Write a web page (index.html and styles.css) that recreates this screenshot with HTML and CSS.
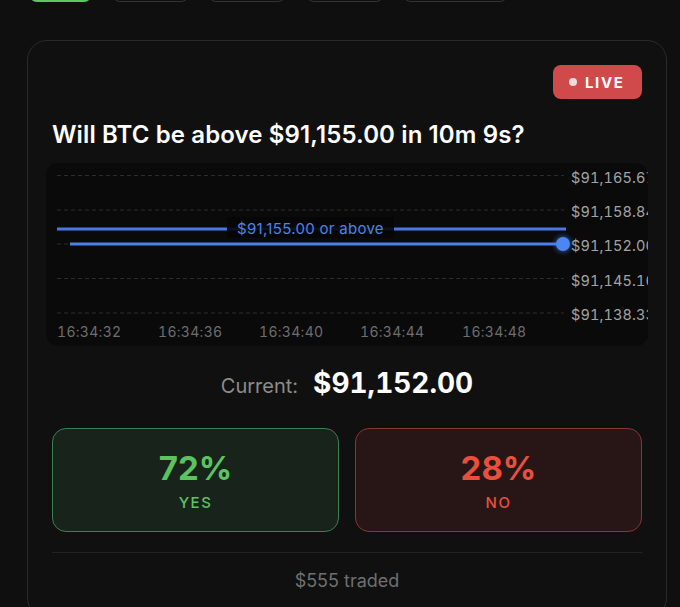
FILE: index.html
```html
<!DOCTYPE html>
<html lang="en">
<head>
<meta charset="utf-8">
<title>BTC market</title>
<link rel="stylesheet" href="styles.css">
</head>
<body>
<div class="page">
  <div class="tabs">
    <div class="tab tab-active tab-a"></div>
    <div class="tab tab-b"></div>
    <div class="tab tab-c"></div>
    <div class="tab tab-c"></div>
    <div class="tab tab-e"></div>
  </div>
  <div class="card">
    <div class="card-head">
      <span class="live"><span class="live-dot"></span>LIVE</span>
    </div>
    <h1 class="question">Will BTC be above $91,155.00 in 10m 9s?</h1>
    <div class="chart">
      <svg class="chart-svg" width="602" height="183" viewBox="0 0 602 183">
        <defs>
          <filter id="glow" x="-100%" y="-100%" width="300%" height="300%">
            <feGaussianBlur stdDeviation="2.5"/>
          </filter>
        </defs>
        <g class="grid">
          <line x1="11" y1="12.5" x2="518" y2="12.5"/>
          <line x1="11" y1="47" x2="518" y2="47"/>
          <line x1="11" y1="81" x2="518" y2="81"/>
          <line x1="11" y1="115.5" x2="518" y2="115.5"/>
          <line x1="11" y1="150" x2="518" y2="150"/>
        </g>
        <g class="ylabels">
          <text x="525" y="19.5">$91,165.67</text>
          <text x="525" y="54">$91,158.84</text>
          <text x="525" y="88">$91,152.00</text>
          <text x="525" y="122.5">$91,145.16</text>
          <text x="525" y="157">$91,138.33</text>
        </g>
        <g class="xlabels">
          <text x="11" y="173.5">16:34:32</text>
          <text x="112" y="173.5">16:34:36</text>
          <text x="213" y="173.5">16:34:40</text>
          <text x="314" y="173.5">16:34:44</text>
          <text x="416" y="173.5">16:34:48</text>
        </g>
        <line class="threshold" x1="11" y1="66" x2="520" y2="66"/>
        <rect class="threshold-box" x="181" y="54" width="167" height="21"/>
        <text class="threshold-label" x="264.5" y="71">$91,155.00 or above</text>
        <line class="price" x1="24" y1="81" x2="517" y2="81"/>
        <circle class="price-glow" cx="517" cy="81" r="8"/>
        <circle class="price-dot" cx="517" cy="81" r="7"/>
      </svg>
    </div>
    <div class="current">
      <span class="current-label">Current:</span>
      <span class="current-value">$91,152.00</span>
    </div>
    <div class="outcomes">
      <div class="outcome outcome-yes">
        <div class="pct">72%</div>
        <div class="side">YES</div>
      </div>
      <div class="outcome outcome-no">
        <div class="pct">28%</div>
        <div class="side">NO</div>
      </div>
    </div>
    <div class="divider"></div>
    <div class="traded">$555 traded</div>
  </div>
</div>
</body>
</html>
```

FILE: styles.css
```css
html, body {
  margin: 0;
  padding: 0;
  background: #0f0f0f;
  overflow: hidden;
}
body {
  font-family: Inter, "Liberation Sans", sans-serif;
  color: #fff;
  height: 607px;
}
.page {
  padding: 0 13px 0 27px;
}
.tabs {
  display: flex;
  gap: 19.5px;
  margin: -30px 0 0 2px;
  height: 32px;
}
.tab {
  box-sizing: border-box;
  height: 32px;
  border: 1px solid #333;
  border-radius: 8px;
}
.tab-active { border: 2px solid #5bc760; }
.tab-a { width: 63px; }
.tab-b { width: 77px; }
.tab-c { width: 78px; }
.tab-e { width: 105px; }

.card {
  margin-top: 38px;
  width: 640px;
  box-sizing: border-box;
  border: 1px solid #2b2b2b;
  border-radius: 20px;
  background: #101010;
  padding: 24px 24px 24px 24px;
}
.card-head {
  display: flex;
  justify-content: flex-end;
}
.live {
  display: flex;
  align-items: center;
  gap: 8px;
  height: 34px;
  width: 89px;
  box-sizing: border-box;
  padding-left: 16px;
  background: #d14a4b;
  border-radius: 8px;
  font-size: 15px;
  font-weight: 700;
  letter-spacing: 1.6px;
  color: #fff;
}
.live-dot {
  width: 8px;
  height: 8px;
  border-radius: 50%;
  background: #f4dada;
}
.question {
  margin: 21px 0 0 0;
  font-size: 24px;
  line-height: 30px;
  font-weight: 600;
  letter-spacing: 0.12px;
  color: #fff;
}
.chart {
  margin: 13px -6px 0 -6px;
  height: 183px;
  background: #0a0a0a;
  border-radius: 12px;
  overflow: hidden;
}
.chart-svg { display: block; }
.grid line {
  stroke: #2c2c2c;
  stroke-width: 1;
  stroke-dasharray: 4 3;
}
.ylabels text {
  font-family: Inter, "Liberation Sans", sans-serif;
  font-size: 14.5px;
  font-variant-numeric: tabular-nums;
  letter-spacing: 0.1px;
  fill: #a3a3a3;
}
.xlabels text {
  font-family: Inter, "Liberation Sans", sans-serif;
  font-size: 14px;
  font-variant-numeric: tabular-nums;
  fill: #6e6e6e;
  letter-spacing: 0.3px;
}
.threshold {
  stroke: #4779e0;
  stroke-width: 3;
}
.threshold-box {
  fill: #060606;
  opacity: 0.9;
}
.threshold-label {
  font-family: Inter, "Liberation Sans", sans-serif;
  font-size: 15px;
  letter-spacing: 0.3px;
  fill: #4f82e6;
  text-anchor: middle;
}
.price {
  stroke: #4b80ea;
  stroke-width: 3;
}
.price-glow {
  fill: #3f7cf0;
  opacity: 0.6;
  filter: url(#glow);
}
.price-dot { fill: #4d86f2; }

.current {
  margin-top: 21px;
  display: flex;
  justify-content: center;
  align-items: baseline;
  gap: 15px;
  line-height: 32px;
}
.current-label {
  font-size: 20px;
  color: #8c8c8c;
}
.current-value {
  font-size: 28px;
  font-weight: 700;
  font-variant-numeric: tabular-nums;
  letter-spacing: 0;
  color: #fff;
}
.outcomes {
  margin-top: 26px;
  display: grid;
  grid-template-columns: 1fr 1fr;
  gap: 16px;
}
.outcome {
  box-sizing: border-box;
  height: 104px;
  border-radius: 14px;
  border: 1.5px solid;
  display: flex;
  flex-direction: column;
  align-items: center;
  justify-content: center;
}
.outcome-yes {
  background: #18231c;
  border-color: #3a8050;
  color: #5bc45f;
}
.outcome-no {
  background: #281617;
  border-color: #8a3434;
  color: #e8503c;
}
.pct {
  font-size: 33px;
  font-weight: 700;
  line-height: 38px;
  margin-top: 2px;
}
.side {
  font-size: 15px;
  font-weight: 500;
  letter-spacing: 1.5px;
  line-height: 20px;
  margin-top: 6px;
}
.divider {
  margin-top: 20px;
  height: 1px;
  background: #232323;
}
.traded {
  margin-top: 16px;
  text-align: center;
  font-size: 18px;
  line-height: 24px;
  color: #6f6f6f;
}
```
